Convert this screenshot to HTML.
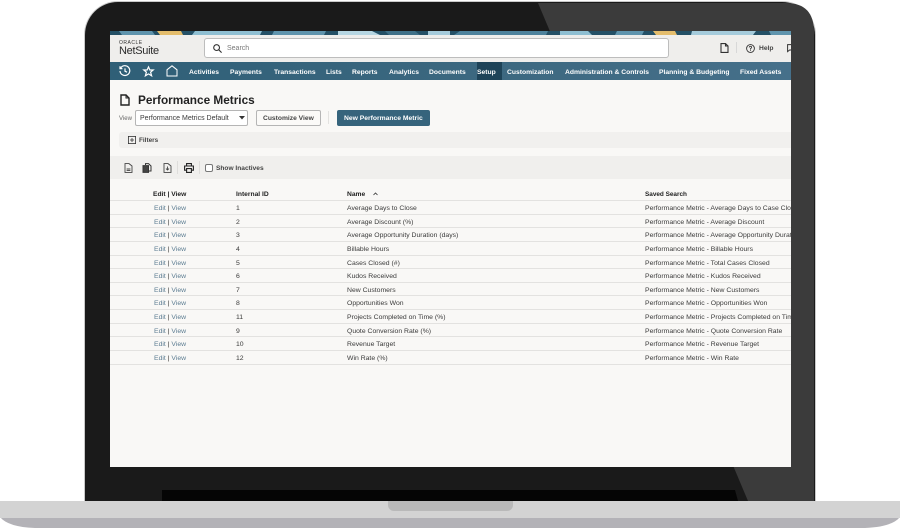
<!DOCTYPE html>
<html><head><meta charset="utf-8"><style>
html,body{margin:0;padding:0;background:#fff}
#r{position:relative;width:900px;height:529px;overflow:hidden;background:#fff;font-family:"Liberation Sans",sans-serif;color:#333}
#r div{position:absolute;white-space:nowrap}
#r svg{position:absolute;overflow:visible}
#w{left:0;top:0;width:900px;height:529px;filter:blur(.35px)}
.n{top:68px;font-size:6.75px;line-height:9px;color:#fff;font-weight:bold}
.c{font-size:6.85px;line-height:9px;color:#3a3a3a}
.e{font-size:6.85px;line-height:9px;color:#5d7d92}
.e b{font-weight:normal;color:#333}
.h{font-size:6.7px;line-height:9px;color:#222;font-weight:bold}
.l{left:110px;width:681px;height:1px;background:#e3e2e0}
</style></head><body><div id="r"><div id="w">
<div style="left:84px;top:1px;width:732px;height:501px;background:#1a1a1a;border:1px solid #c9c9c9;border-bottom:0;box-sizing:border-box;border-radius:34px 34px 0 0 / 34px 34px 0 0"></div>
<svg style="left:0;top:0" width="900" height="529"><path d="M538 3H786Q814 3 814 32V501H748Z" fill="#3b3b3b"/><path d="M162 490H735L738 501H162Z" fill="#050505"/></svg>
<svg style="left:0;top:501px" width="900" height="28"><path d="M0 16Q8 26 35 27H865Q892 26 900 16Z" fill="#b3b2b7"/><rect width="900" height="17" fill="#d3d3d3"/></svg>
<div style="left:388px;top:501px;width:125px;height:10px;background:#b9b9b9;border-radius:0 0 6px 6px"></div>

<div style="left:110px;top:31px;width:681px;height:436px;background:#f9f8f6;overflow:hidden">
<svg style="left:0;top:0" width="681" height="4" viewBox="0 0 681 4">
<rect width="681" height="4" fill="#245066"/>
<path d="M9 0H42L45 4H12Z" fill="#5f94ad"/>
<path d="M47 0H71L73 4H50Z" fill="#e4bd6c"/>
<path d="M85 0H152L150 4H82Z" fill="#8fbfd2"/>
<path d="M164 0H216L214 4H162Z" fill="#5f94ad"/>
<path d="M228 0H262L270 4H228Z" fill="#b6d6e2"/>
<path d="M275 0H305L310 4H279Z" fill="#3f7088"/>
<path d="M318 0H340V4H318Z" fill="#a5cbdb"/>
<path d="M350 0H438L436 4H344Z" fill="#4d829c"/>
<path d="M450 0H478L482 4H450Z" fill="#8fbfd2"/>
<path d="M507 0H534L532 4H505Z" fill="#5f94ad"/>
<path d="M543 0H565L567 4H546Z" fill="#e4bd6c"/>
<path d="M582 0H646L643 4H581Z" fill="#a5cbdb"/>
<path d="M659 0H681V4H661Z" fill="#5f94ad"/>
</svg>
<div style="left:0;top:4px;width:681px;height:27px;background:#efeeec"></div>
<div style="left:0;top:31px;width:681px;height:18px;background:linear-gradient(90deg,#2f5f77,#3c6880 55%,#46708a)"></div>
<div style="left:367px;top:31px;width:25px;height:18px;background:#1e4358"></div>
</div>

<div style="left:119px;top:40px;font-size:5px;line-height:6px;letter-spacing:.5px;color:#333">ORACLE</div>
<div style="left:119px;top:45px;font-size:11px;line-height:13px;color:#2b2b2b;letter-spacing:-.3px">NetSuite</div>
<div style="left:204px;top:38px;width:465px;height:20px;box-sizing:border-box;background:#fff;border:1px solid #bdbdbd;border-radius:3px"></div>
<svg style="left:213px;top:44px" width="9" height="9" viewBox="0 0 9 9" fill="none" stroke="#333" stroke-width="1.1"><circle cx="3.6" cy="3.6" r="2.9"/><path d="M5.8 5.8L8.6 8.6"/></svg>
<div style="left:227px;top:44px;font-size:7px;line-height:9px;color:#777">Search</div>
<svg style="left:720px;top:43px" width="9" height="10" viewBox="0 0 9 10" fill="none" stroke="#333" stroke-width="1.1"><path d="M1 .6H5.5L8 3V9.4H1Z"/><path d="M5.5 .6V3H8"/></svg>
<div style="left:736px;top:42px;width:1px;height:11px;background:#d8d8d8"></div>
<svg style="left:746px;top:44px" width="9" height="9" viewBox="0 0 9 9" fill="none" stroke="#333" stroke-width=".9"><circle cx="4.5" cy="4.5" r="3.9"/><path d="M3.2 3.4Q3.4 2.2 4.6 2.3Q5.8 2.5 5.6 3.5Q5.4 4.2 4.5 4.7V5.6M4.5 6.2V7"/></svg>
<div style="left:759px;top:44px;font-size:6.7px;line-height:9px;color:#444;font-weight:bold">Help</div>
<svg style="left:787px;top:44px;" width="4" height="9" viewBox="0 0 4 9" fill="none" stroke="#333" stroke-width="1"><path d="M4 .6H.6V7.6L2.6 6H4"/></svg>

<svg style="left:119px;top:65px" width="12" height="12" viewBox="0 0 12 12" fill="none" stroke="#fff" stroke-width="1.2"><path d="M1.6 3.2A4.9 4.9 0 1 1 1 6"/><path d="M1 1.2V3.6H3.4"/><path d="M6 3.4V6.2L8 7.2"/></svg>
<svg style="left:143px;top:66px" width="11" height="11" viewBox="0 0 11 11" fill="none" stroke="#fff" stroke-width="1.2"><path d="M5.5 .9L6.9 4H10.2L7.6 6.2L8.6 9.8L5.5 7.9L2.4 9.8L3.4 6.2L.8 4H4.1Z"/></svg>
<svg style="left:166px;top:65px" width="12" height="12" viewBox="0 0 12 12" fill="none" stroke="#fff" stroke-width="1"><path d="M1 11V4.8L6 .8L11 4.8V11Z"/></svg>
<div class="n" style="left:189px">Activities</div>
<div class="n" style="left:230px">Payments</div>
<div class="n" style="left:274px">Transactions</div>
<div class="n" style="left:326px">Lists</div>
<div class="n" style="left:352px">Reports</div>
<div class="n" style="left:389px">Analytics</div>
<div class="n" style="left:429px">Documents</div>
<div class="n" style="left:477px">Setup</div>
<div class="n" style="left:507px">Customization</div>
<div class="n" style="left:565px">Administration &amp; Controls</div>
<div class="n" style="left:659px">Planning &amp; Budgeting</div>
<div class="n" style="left:740px">Fixed Assets</div>

<svg style="left:120px;top:94px" width="10" height="12" viewBox="0 0 10 12" fill="none" stroke="#222" stroke-width="1.4"><path d="M1 1H6L9 4V11H1Z"/><path d="M6 1V4H9" stroke-width="1"/></svg>
<div style="left:138px;top:93px;font-size:11.8px;line-height:15px;font-weight:bold;color:#222">Performance Metrics</div>
<div style="left:119px;top:115px;font-size:6px;line-height:8px;color:#666">View</div>
<div style="left:135px;top:110px;width:113px;height:16px;box-sizing:border-box;background:#fff;border:1px solid #b5b5b5;border-radius:2px"></div>
<div class="c" style="left:140px;top:114px;font-size:7px">Performance Metrics Default</div>
<svg style="left:239px;top:116px" width="6" height="4"><path d="M0 0H6L3 3.5Z" fill="#333"/></svg>
<div style="left:256px;top:110px;width:65px;height:16px;box-sizing:border-box;background:#fbfaf8;border:1px solid #b5b5b5;border-radius:2px"></div>
<div class="h" style="left:263px;top:114px;color:#444">Customize View</div>
<div style="left:328px;top:111px;width:1px;height:13px;background:#e3e2e0"></div>
<div style="left:337px;top:110px;width:93px;height:16px;background:#36647c;border-radius:2px"></div>
<div class="n" style="left:344px;top:114px">New Performance Metric</div>

<div style="left:119px;top:132px;width:672px;height:16px;background:#f1f0ee;border-radius:3px 0 0 3px"></div>
<svg style="left:128px;top:136px" width="8" height="8" viewBox="0 0 8 8" fill="none" stroke="#333" stroke-width=".8"><rect x=".4" y=".4" width="7.2" height="7.2"/><path d="M4 2V6M2 4H6"/></svg>
<div class="h" style="left:139px;top:136px;color:#444;font-size:6.4px">Filters</div>

<div style="left:110px;top:156px;width:681px;height:23px;background:#f0efed"></div>
<svg style="left:124px;top:163px" width="9" height="10" viewBox="0 0 9 10" fill="none" stroke="#444" stroke-width=".9"><path d="M1 .6H5L8 3V9.4H1Z"/><path d="M2.6 6H6.4M2.6 7.6H6.4"/></svg>
<svg style="left:142px;top:163px" width="10" height="10" viewBox="0 0 10 10" fill="none" stroke="#333" stroke-width="1"><path d="M3.5 2V.6H6.5L9 3V8H7"/><path d="M1 2.6H6.5V9.4H1Z" fill="#444"/></svg>
<svg style="left:163px;top:163px" width="9" height="10" viewBox="0 0 9 10" fill="none" stroke="#444" stroke-width=".9"><path d="M1 .6H5L8 3V9.4H1Z"/><path d="M4.5 3.5V7M3 5.6L4.5 7L6 5.6"/></svg>
<div style="left:177px;top:161px;width:1px;height:13px;background:#dedddb"></div>
<svg style="left:184px;top:163px" width="10" height="10" viewBox="0 0 10 10" fill="none" stroke="#222" stroke-width="1.1"><path d="M2.6 3V.6H7.4V3"/><path d="M2.4 7.2H.6V3H9.4V7.2H7.6"/><path d="M2.6 5.6H7.4V9.4H2.6Z"/></svg>
<div style="left:199px;top:161px;width:1px;height:13px;background:#dedddb"></div>
<div style="left:205px;top:164px;width:8px;height:8px;box-sizing:border-box;background:#fff;border:1px solid #777;border-radius:2px"></div>
<div class="h" style="left:216px;top:164px;color:#444;font-size:6.6px">Show Inactives</div>

<div class="h" style="left:153px;top:190px">Edit | View</div>
<div class="h" style="left:236px;top:190px">Internal ID</div>
<div class="h" style="left:347px;top:190px">Name</div>
<svg style="left:373px;top:192px" width="5" height="4" fill="none" stroke="#333" stroke-width=".8"><path d="M.5 3L2.5 1L4.5 3"/></svg>
<div class="h" style="left:645px;top:190px;font-size:6.4px">Saved Search</div>

<div style="left:0;top:0;width:791px;height:529px;overflow:hidden">
<div class="l" style="top:200px"></div><div class="l" style="top:214px"></div><div class="l" style="top:227px"></div><div class="l" style="top:241px"></div><div class="l" style="top:255px"></div><div class="l" style="top:268px"></div><div class="l" style="top:282px"></div><div class="l" style="top:295px"></div><div class="l" style="top:309px"></div><div class="l" style="top:323px"></div><div class="l" style="top:336px"></div><div class="l" style="top:350px"></div><div class="l" style="top:364px"></div>

<div class="e" style="left:154px;top:204px">Edit <b>|</b> View</div><div class="c" style="left:236px;top:204px">1</div><div class="c" style="left:347px;top:204px">Average Days to Close</div><div class="c" style="left:645px;top:204px">Performance Metric - Average Days to Case Close</div>
<div class="e" style="left:154px;top:218px">Edit <b>|</b> View</div><div class="c" style="left:236px;top:218px">2</div><div class="c" style="left:347px;top:218px">Average Discount (%)</div><div class="c" style="left:645px;top:218px">Performance Metric - Average Discount</div>
<div class="e" style="left:154px;top:231px">Edit <b>|</b> View</div><div class="c" style="left:236px;top:231px">3</div><div class="c" style="left:347px;top:231px">Average Opportunity Duration (days)</div><div class="c" style="left:645px;top:231px">Performance Metric - Average Opportunity Duration</div>
<div class="e" style="left:154px;top:245px">Edit <b>|</b> View</div><div class="c" style="left:236px;top:245px">4</div><div class="c" style="left:347px;top:245px">Billable Hours</div><div class="c" style="left:645px;top:245px">Performance Metric - Billable Hours</div>
<div class="e" style="left:154px;top:259px">Edit <b>|</b> View</div><div class="c" style="left:236px;top:259px">5</div><div class="c" style="left:347px;top:259px">Cases Closed (#)</div><div class="c" style="left:645px;top:259px">Performance Metric - Total Cases Closed</div>
<div class="e" style="left:154px;top:272px">Edit <b>|</b> View</div><div class="c" style="left:236px;top:272px">6</div><div class="c" style="left:347px;top:272px">Kudos Received</div><div class="c" style="left:645px;top:272px">Performance Metric - Kudos Received</div>
<div class="e" style="left:154px;top:286px">Edit <b>|</b> View</div><div class="c" style="left:236px;top:286px">7</div><div class="c" style="left:347px;top:286px">New Customers</div><div class="c" style="left:645px;top:286px">Performance Metric - New Customers</div>
<div class="e" style="left:154px;top:299px">Edit <b>|</b> View</div><div class="c" style="left:236px;top:299px">8</div><div class="c" style="left:347px;top:299px">Opportunities Won</div><div class="c" style="left:645px;top:299px">Performance Metric - Opportunities Won</div>
<div class="e" style="left:154px;top:313px">Edit <b>|</b> View</div><div class="c" style="left:236px;top:313px">11</div><div class="c" style="left:347px;top:313px">Projects Completed on Time (%)</div><div class="c" style="left:645px;top:313px">Performance Metric - Projects Completed on Time</div>
<div class="e" style="left:154px;top:327px">Edit <b>|</b> View</div><div class="c" style="left:236px;top:327px">9</div><div class="c" style="left:347px;top:327px">Quote Conversion Rate (%)</div><div class="c" style="left:645px;top:327px">Performance Metric - Quote Conversion Rate</div>
<div class="e" style="left:154px;top:340px">Edit <b>|</b> View</div><div class="c" style="left:236px;top:340px">10</div><div class="c" style="left:347px;top:340px">Revenue Target</div><div class="c" style="left:645px;top:340px">Performance Metric - Revenue Target</div>
<div class="e" style="left:154px;top:354px">Edit <b>|</b> View</div><div class="c" style="left:236px;top:354px">12</div><div class="c" style="left:347px;top:354px">Win Rate (%)</div><div class="c" style="left:645px;top:354px">Performance Metric - Win Rate</div>
</div>
</div></div></body></html>
